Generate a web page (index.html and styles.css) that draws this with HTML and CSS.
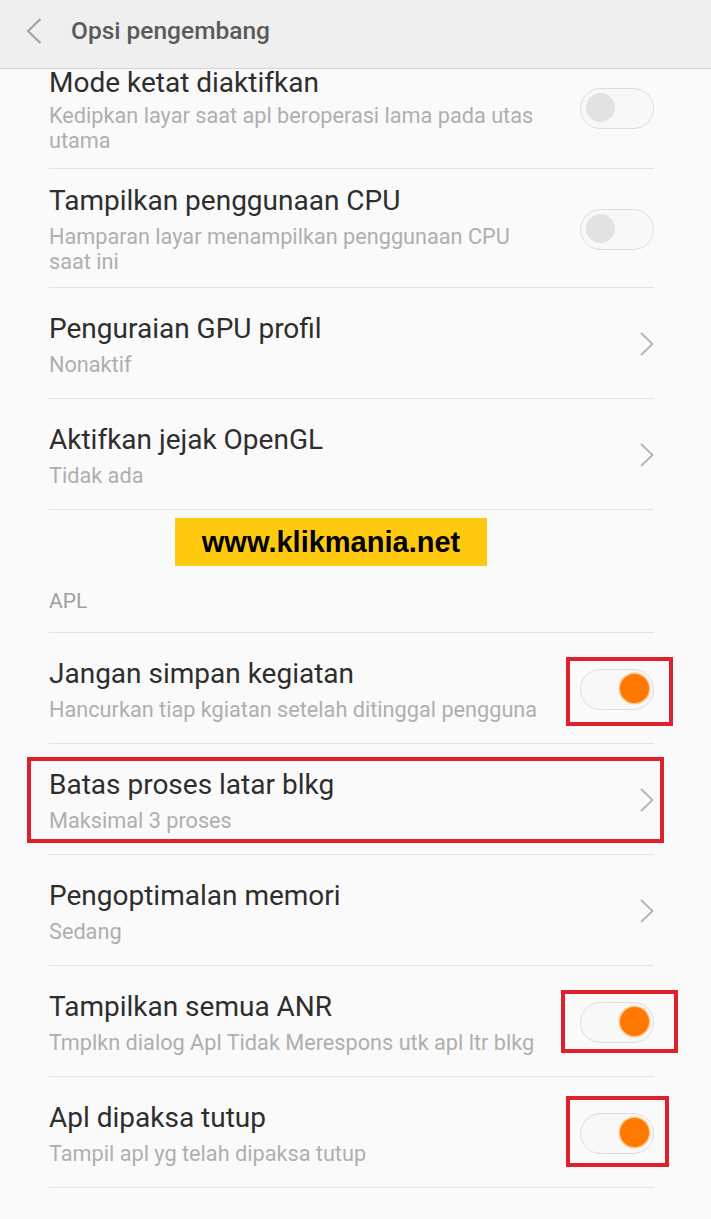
FILE: index.html
```html
<!DOCTYPE html>
<html lang="id">
<head>
<meta charset="utf-8">
<title>Opsi pengembang</title>
<link rel="stylesheet" href="styles.css">
</head>
<body>
<div class="screen">
  <header class="topbar">
    <svg class="back" width="16" height="26" viewBox="0 0 16 26"><polyline points="14.5,1 2,13 14.5,25" fill="none" stroke="#a0a0a0" stroke-width="2"/></svg>
    <h1 class="title">Opsi pengembang</h1>
  </header>
  <div class="list">
    <div class="row first">
      <div class="text"><div class="t">Mode ketat diaktifkan</div><div class="s">Kedipkan layar saat apl beroperasi lama pada utas utama</div></div>
      <div class="toggle"><span class="knob"></span></div>
    </div>
    <div class="row">
      <div class="text"><div class="t">Tampilkan penggunaan CPU</div><div class="s">Hamparan layar menampilkan penggunaan CPU saat ini</div></div>
      <div class="toggle"><span class="knob"></span></div>
    </div>
    <div class="row">
      <div class="text"><div class="t">Penguraian GPU profil</div><div class="s">Nonaktif</div></div>
      <svg class="chev" width="14" height="24" viewBox="0 0 14 24"><polyline points="1,1 12.5,12 1,23" fill="none" stroke="#b8b8b8" stroke-width="2"/></svg>
    </div>
    <div class="row">
      <div class="text"><div class="t">Aktifkan jejak OpenGL</div><div class="s">Tidak ada</div></div>
      <svg class="chev" width="14" height="24" viewBox="0 0 14 24"><polyline points="1,1 12.5,12 1,23" fill="none" stroke="#b8b8b8" stroke-width="2"/></svg>
    </div>
    <div class="section">
      <div class="banner">www.klikmania.net</div>
      <div class="label">APL</div>
    </div>
    <div class="row">
      <div class="text"><div class="t">Jangan simpan kegiatan</div><div class="s">Hancurkan tiap kgiatan setelah ditinggal pengguna</div></div>
      <div class="toggle on"><span class="knob"></span></div>
    </div>
    <div class="row">
      <div class="text"><div class="t">Batas proses latar blkg</div><div class="s">Maksimal 3 proses</div></div>
      <svg class="chev" width="14" height="24" viewBox="0 0 14 24"><polyline points="1,1 12.5,12 1,23" fill="none" stroke="#b8b8b8" stroke-width="2"/></svg>
    </div>
    <div class="row">
      <div class="text"><div class="t">Pengoptimalan memori</div><div class="s">Sedang</div></div>
      <svg class="chev" width="14" height="24" viewBox="0 0 14 24"><polyline points="1,1 12.5,12 1,23" fill="none" stroke="#b8b8b8" stroke-width="2"/></svg>
    </div>
    <div class="row">
      <div class="text"><div class="t">Tampilkan semua ANR</div><div class="s">Tmplkn dialog Apl Tidak Merespons utk apl ltr blkg</div></div>
      <div class="toggle on"><span class="knob"></span></div>
    </div>
    <div class="row">
      <div class="text"><div class="t">Apl dipaksa tutup</div><div class="s">Tampil apl yg telah dipaksa tutup</div></div>
      <div class="toggle on"><span class="knob"></span></div>
    </div>
  </div>
  <div class="mark m1"></div>
  <div class="mark m2"></div>
  <div class="mark m3"></div>
  <div class="mark m4"></div>
</div>
</body>
</html>
```
FILE: styles.css
```css
html, body {
  margin: 0;
  padding: 0;
  background: #fafafa;
}
.screen {
  position: relative;
  width: 711px;
  height: 1219px;
  overflow: hidden;
  background: #fafafa;
  font-family: Roboto, "Noto Sans", sans-serif;
}
.topbar {
  height: 69px;
  box-sizing: border-box;
  background: #efefef;
  border-bottom: 1px solid #d4d4d4;
  display: flex;
  align-items: center;
  padding-left: 26px;
}
.back {
  display: block;
  margin-top: -7px;
}
.title {
  margin: -8px 0 0 29px;
  font-size: 24.5px;
  font-weight: 500;
  color: #5a5a5a;
}
.row {
  display: flex;
  align-items: center;
  min-height: 111px;
  box-sizing: border-box;
  padding: 15px 0 13px;
  margin: 0 57px 0 49px;
  border-bottom: 1px solid #e2e2e2;
}
.row.first {
  min-height: 0;
  padding: 0 0 15px;
}
.row.first .t {
  line-height: 28px;
}
.row.first .toggle {
  margin-top: -6px;
}
.text {
  flex: 1;
  min-width: 0;
  padding-right: 32px;
}
.t {
  font-size: 28px;
  line-height: 34px;
  color: #2e2e2e;
  margin-bottom: 6px;
}
.s {
  font-size: 21.7px;
  line-height: 25px;
  color: #afafaf;
}
.toggle {
  position: relative;
  flex: none;
  width: 74px;
  height: 41px;
  box-sizing: border-box;
  border: 1.5px solid #dddddd;
  border-radius: 21px;
  background: #f8f8f8;
}
.knob {
  position: absolute;
  top: 4.5px;
  left: 5px;
  width: 29px;
  height: 29px;
  border-radius: 50%;
  background: #e2e2e2;
}
.toggle.on .knob {
  left: auto;
  right: 4.5px;
  background: #ff7800;
  box-shadow: 0 0 0 1.5px #ffc994;
}
.chev {
  flex: none;
  display: block;
}
.section {
  margin: 0 57px 0 49px;
  padding: 8px 0 19px;
  border-bottom: 1px solid #e2e2e2;
}
.banner {
  margin-left: 126px;
  width: 312px;
  height: 48px;
  background: #ffc90e;
  color: #000;
  font-family: "Liberation Sans", Arial, sans-serif;
  font-weight: bold;
  font-size: 29px;
  line-height: 48px;
  text-align: center;
}
.label {
  margin-top: 23px;
  font-size: 21px;
  line-height: 24px;
  color: #a0a0a0;
}
.mark {
  position: absolute;
  box-sizing: border-box;
  border: 4px solid #e0202b;
}
.m1 { left: 566px; top: 657px; width: 107px; height: 69px; }
.m2 { left: 27px; top: 757px; width: 637px; height: 86px; }
.m3 { left: 561px; top: 990px; width: 117px; height: 63px; }
.m4 { left: 566px; top: 1096px; width: 103px; height: 71px; }
```
